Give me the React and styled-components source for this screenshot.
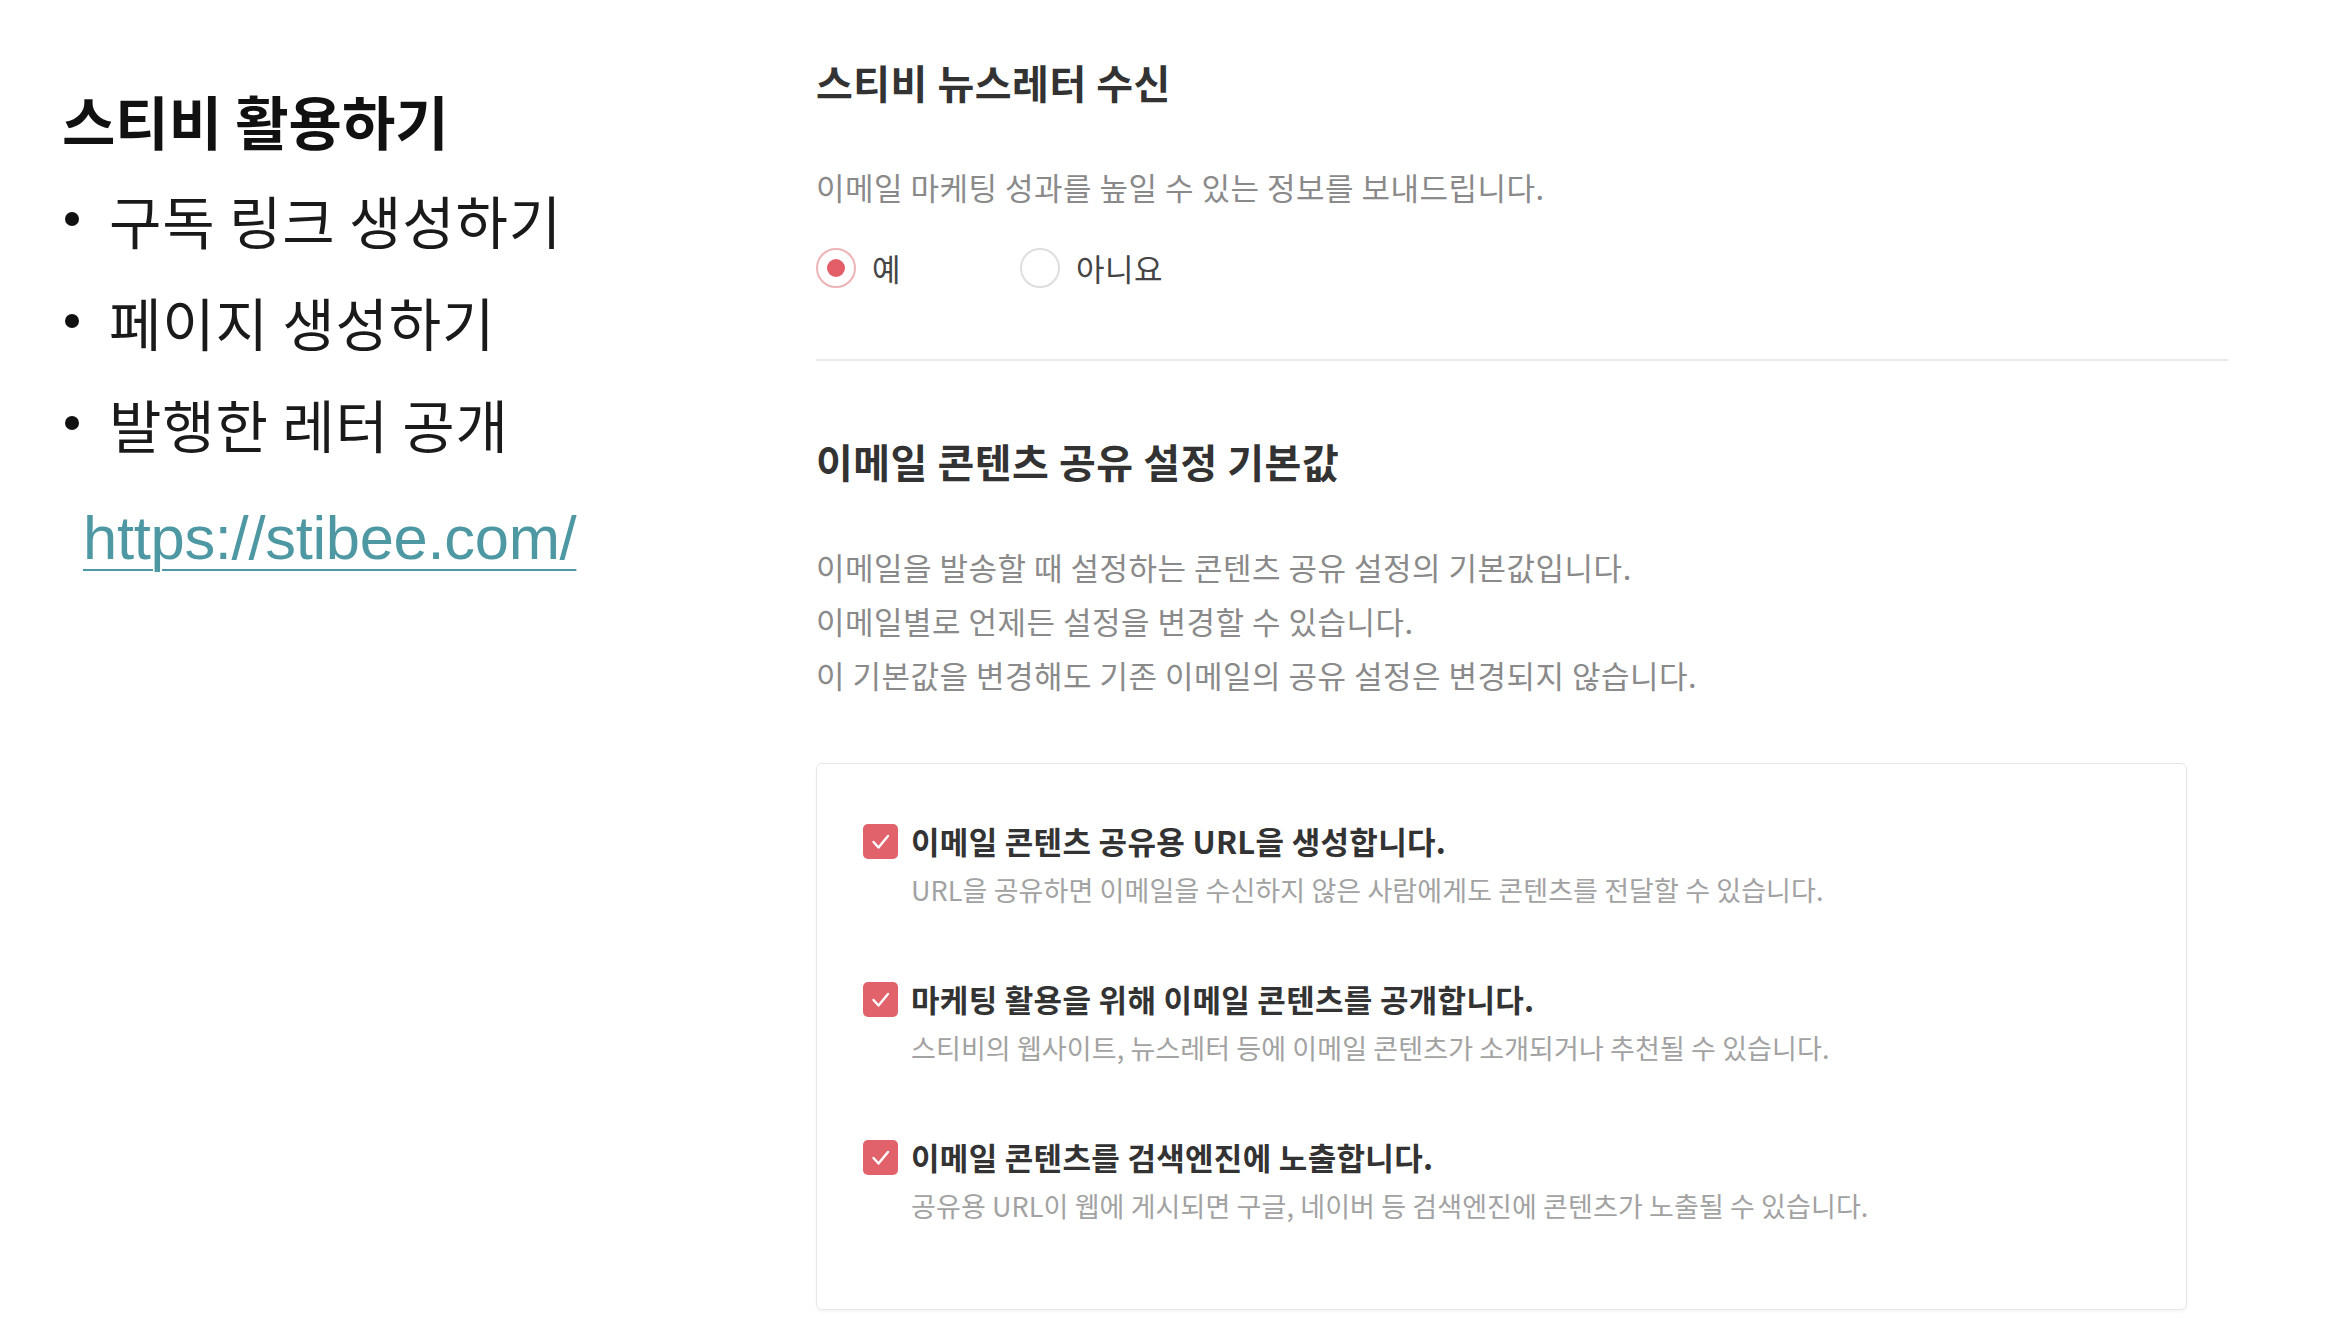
import styled, { createGlobalStyle } from "styled-components"

const GlobalStyle = createGlobalStyle`
    html, body {
        margin: 0;
        padding: 0;
        background: #ffffff;
    }
    body {
        font-family: "Noto Sans CJK KR", "Noto Sans", sans-serif;
        color: #222;
    }
`

const Page = styled.div`
    width: 2348px;
    height: 1335px;
    display: flex;
    overflow: hidden;
    background: #fff;
`

const Sidebar = styled.div`
    width: 754px;
    padding: 85px 0 0 62px;
    display: flex;
    flex-direction: column;
    align-items: flex-start;
`

const SideTitle = styled.h1`
    margin: 0;
    font-size: 58px;
    line-height: 70px;
    font-weight: 700;
    color: #111;
`

const BulletList = styled.ul`
    list-style: none;
    margin: 13px 0 0;
    padding: 0;
`

const Bullet = styled.li`
    display: flex;
    align-items: center;
    height: 102px;
    font-size: 57px;
    letter-spacing: 0.8px;
    color: #1a1a1a;

    &::before {
        content: "";
        flex: none;
        width: 14px;
        height: 14px;
        border-radius: 50%;
        background: #111;
        margin: 0 30px 0 3px;
    }
`

const SiteLink = styled.a`
    margin: 28px 0 0 21px;
    font-family: "Liberation Sans", Arial, sans-serif;
    font-size: 61.5px;
    line-height: 72px;
    letter-spacing: -0.3px;
    color: #4d98a3;
    text-decoration: underline;
    text-decoration-thickness: 2px;
    text-underline-offset: 10px;
`

const Main = styled.div`
    width: 1412px;
    padding-top: 57px;
    display: flex;
    flex-direction: column;
`

const SectionTitle = styled.h2`
    margin: ${({ $top }) => $top || 0}px 0 0;
    font-size: 40px;
    line-height: 50px;
    letter-spacing: 0.5px;
    font-weight: 700;
    color: #333;
`

const Desc = styled.p`
    margin: ${({ $top }) => $top || 0}px 0 0;
    font-size: 31px;
    line-height: ${({ $lh }) => $lh || 40}px;
    letter-spacing: 0.5px;
    color: #8a8a8a;
`

const RadioRow = styled.div`
    margin-top: 40px;
    display: flex;
    gap: 119px;
`

const RadioOption = styled.label`
    display: flex;
    align-items: center;
    gap: 16px;
    font-size: 31px;
    line-height: 42px;
    letter-spacing: 0.5px;
    color: #444;
`

const RadioMark = styled.span`
    box-sizing: border-box;
    width: 40px;
    height: 40px;
    border-radius: 50%;
    border: 2px solid ${({ $on }) => ($on ? "#eeb3b7" : "#dedede")};
    display: flex;
    align-items: center;
    justify-content: center;

    &::after {
        content: "";
        width: 18px;
        height: 18px;
        border-radius: 50%;
        background: ${({ $on }) => ($on ? "#e35e68" : "transparent")};
    }
`

const Divider = styled.hr`
    margin: 70px 0 0;
    border: none;
    height: 2px;
    background: #ebebeb;
    width: 1412px;
`

const OptionBox = styled.div`
    margin-top: 61px;
    width: 1371px;
    height: 547px;
    box-sizing: border-box;
    border: 1.5px solid #e7e7e7;
    border-radius: 6px;
    box-shadow: 0 2px 3px rgba(0, 0, 0, 0.04);
    padding: 57px 0 0 46px;
    display: flex;
    flex-direction: column;
    gap: 72px;
`

const Item = styled.div`
    display: grid;
    grid-template-columns: 35px 1fr;
    column-gap: 13px;
    align-items: center;
`

const ItemLabel = styled.div`
    font-size: 31px;
    line-height: 40px;
    letter-spacing: 0.3px;
    font-weight: 700;
    color: #333;
`

const ItemDesc = styled.div`
    grid-column: 2;
    margin-top: 12px;
    font-size: 27px;
    line-height: 34px;
    letter-spacing: 0.1px;
    color: #a2a2a2;
`

function CheckBox() {
    return (
        <svg width="35" height="35" viewBox="0 0 35 35">
            <rect x="0" y="0" width="35" height="35" rx="5" fill="#e1626b" />
            <polyline
                points="10.5,18 15.5,23.5 25,12"
                fill="none"
                stroke="#fff"
                strokeWidth="2.4"
                strokeLinecap="round"
                strokeLinejoin="round"
            />
        </svg>
    )
}

const items = [
    {
        label: "이메일 콘텐츠 공유용 URL을 생성합니다.",
        desc: "URL을 공유하면 이메일을 수신하지 않은 사람에게도 콘텐츠를 전달할 수 있습니다.",
    },
    {
        label: "마케팅 활용을 위해 이메일 콘텐츠를 공개합니다.",
        desc: "스티비의 웹사이트, 뉴스레터 등에 이메일 콘텐츠가 소개되거나 추천될 수 있습니다.",
    },
    {
        label: "이메일 콘텐츠를 검색엔진에 노출합니다.",
        desc: "공유용 URL이 웹에 게시되면 구글, 네이버 등 검색엔진에 콘텐츠가 노출될 수 있습니다.",
    },
]

export default function App() {
    return (
        <Page>
            <GlobalStyle />
            <Sidebar>
                <SideTitle>스티비 활용하기</SideTitle>
                <BulletList>
                    <Bullet>구독 링크 생성하기</Bullet>
                    <Bullet>페이지 생성하기</Bullet>
                    <Bullet>발행한 레터 공개</Bullet>
                </BulletList>
                <SiteLink href="#">https://stibee.com/</SiteLink>
            </Sidebar>

            <Main>
                <SectionTitle>스티비 뉴스레터 수신</SectionTitle>
                <Desc $top={60}>이메일 마케팅 성과를 높일 수 있는 정보를 보내드립니다.</Desc>
                <RadioRow>
                    <RadioOption>
                        <RadioMark $on />
                        예
                    </RadioOption>
                    <RadioOption>
                        <RadioMark />
                        아니요
                    </RadioOption>
                </RadioRow>
                <Divider />

                <SectionTitle $top={75}>이메일 콘텐츠 공유 설정 기본값</SectionTitle>
                <Desc $top={54} $lh={54}>
                    이메일을 발송할 때 설정하는 콘텐츠 공유 설정의 기본값입니다.
                    <br />
                    이메일별로 언제든 설정을 변경할 수 있습니다.
                    <br />
                    이 기본값을 변경해도 기존 이메일의 공유 설정은 변경되지 않습니다.
                </Desc>

                <OptionBox>
                    {items.map((it) => (
                        <Item key={it.label}>
                            <CheckBox />
                            <ItemLabel>{it.label}</ItemLabel>
                            <ItemDesc>{it.desc}</ItemDesc>
                        </Item>
                    ))}
                </OptionBox>
            </Main>
        </Page>
    )
}
